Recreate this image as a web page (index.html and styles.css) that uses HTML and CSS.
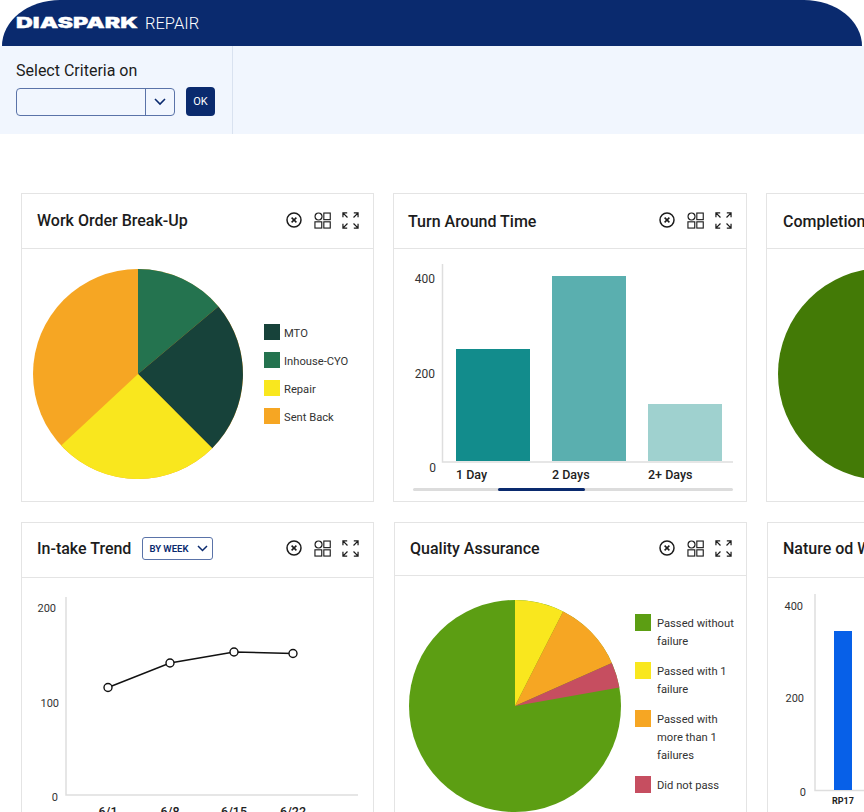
FILE: index.html
```html
<!DOCTYPE html>
<html lang="en">
<head>
<meta charset="utf-8">
<title>Diaspark Repair</title>
<link rel="stylesheet" href="styles.css">
</head>
<body>
<svg class="icon-defs" width="0" height="0" aria-hidden="true">
  <symbol id="i-close" viewBox="0 0 16 16">
    <circle cx="8" cy="8" r="7" fill="none" stroke="#1c1c1c" stroke-width="1.5"/>
    <path d="M5.6 5.6l4.8 4.8M10.4 5.6l-4.8 4.8" fill="none" stroke="#1c1c1c" stroke-width="1.5"/>
  </symbol>
  <symbol id="i-grid" viewBox="0 0 18 18">
    <circle cx="4.8" cy="4.8" r="3.7" fill="none" stroke="#1c1c1c" stroke-width="1.2"/>
    <rect x="10.4" y="1.1" width="6.8" height="7" fill="none" stroke="#1c1c1c" stroke-width="1.2"/>
    <rect x="1" y="10.4" width="7.2" height="6.6" fill="none" stroke="#1c1c1c" stroke-width="1.2"/>
    <rect x="10.4" y="10.4" width="6.8" height="6.6" fill="none" stroke="#1c1c1c" stroke-width="1.2"/>
  </symbol>
  <symbol id="i-expand" viewBox="0 0 18 18">
    <path d="M1 5.5V1h4.5M1.2 1.2l4.6 4.6M17 5.5V1h-4.5M16.8 1.2l-4.6 4.6M1 12.5V17h4.5M1.2 16.8l4.6-4.6M17 12.5V17h-4.5M16.8 16.8l-4.6-4.6" fill="none" stroke="#1c1c1c" stroke-width="1.3"/>
  </symbol>
</svg>

<header class="topbar">
  <svg class="logo" width="124" height="16" viewBox="0 0 124 16">
    <text class="logo-text" x="0" y="13" textLength="122" lengthAdjust="spacingAndGlyphs">DIASPARK</text>
  </svg>
  <span class="product">REPAIR</span>
</header>

<section class="criteria">
  <div class="criteria-panel">
    <label class="criteria-label">Select Criteria on</label>
    <div class="criteria-row">
      <div class="select">
        <span class="select-value"></span>
        <span class="select-arrow">
          <svg width="12" height="8" viewBox="0 0 12 8"><path d="M1 1l5 5 5-5" fill="none" stroke="#0a2a6e" stroke-width="1.6"/></svg>
        </span>
      </div>
      <button class="ok-btn">OK</button>
    </div>
  </div>
</section>

<main class="dashboard">
  <div class="row row-top">
    <article class="card">
      <div class="card-head">
        <h2 class="card-title">Work Order Break-Up</h2>
        <div class="card-tools">
          <svg class="tool tool-close"><use href="#i-close"/></svg>
          <svg class="tool tool-grid"><use href="#i-grid"/></svg>
          <svg class="tool tool-expand"><use href="#i-expand"/></svg>
        </div>
      </div>
      <div class="card-body pie-body pie-one">
        <svg class="pie" width="210" height="210" viewBox="0 0 210 210">
          <circle cx="105" cy="105" r="105" fill="#f6a623"/>
          <path d="M105 105V0A105 105 0 0 1 185.4 37.5Z" fill="#24734f"/>
          <path d="M105 105L185.4 37.5A105 105 0 0 1 179.2 179.2Z" fill="#17423a"/>
          <path d="M105 105L179.2 179.2A105 105 0 0 1 28.2 176.6Z" fill="#f9e71e"/>
        </svg>
        <ul class="legend legend-one">
          <li class="legend-item"><span class="swatch c-dark"></span>MTO</li>
          <li class="legend-item"><span class="swatch c-mid"></span>Inhouse-CYO</li>
          <li class="legend-item"><span class="swatch c-yellow"></span>Repair</li>
          <li class="legend-item"><span class="swatch c-orange"></span>Sent Back</li>
        </ul>
      </div>
    </article>

    <article class="card card-wide">
      <div class="card-head">
        <h2 class="card-title title-low">Turn Around Time</h2>
        <div class="card-tools">
          <svg class="tool tool-close"><use href="#i-close"/></svg>
          <svg class="tool tool-grid"><use href="#i-grid"/></svg>
          <svg class="tool tool-expand"><use href="#i-expand"/></svg>
        </div>
      </div>
      <div class="card-body">
        <svg class="chart" width="352" height="252" viewBox="394 249 352 252">
          <path class="axis" d="M442.5 264V462H733"/>
          <text class="tick" x="435" y="283" text-anchor="end">400</text>
          <text class="tick" x="435" y="378" text-anchor="end">200</text>
          <text class="tick" x="436" y="472" text-anchor="end">0</text>
          <rect x="456" y="349" width="74" height="112" fill="#128c8c"/>
          <rect x="552" y="276" width="74" height="185" fill="#5aafaf"/>
          <rect x="648" y="404" width="74" height="57" fill="#9fd1cf"/>
          <text class="bar-label" x="456" y="479">1 Day</text>
          <text class="bar-label" x="552" y="479">2 Days</text>
          <text class="bar-label" x="648" y="479">2+ Days</text>
          <rect x="413" y="488" width="320" height="3" rx="1.5" fill="#dcdcdc"/>
          <rect x="498" y="488" width="87" height="3" rx="1.5" fill="#0a2a6e"/>
        </svg>
      </div>
    </article>

    <article class="card card-gap">
      <div class="card-head">
        <h2 class="card-title title-low title-clip">Completion</h2>
      </div>
      <div class="card-body">
        <svg class="chart" width="351" height="252" viewBox="767 249 351 252">
          <circle cx="884" cy="374" r="106" fill="#437a06"/>
        </svg>
      </div>
    </article>
  </div>

  <div class="row row-bottom">
    <article class="card">
      <div class="card-head head-tight">
        <div class="title-group">
          <h2 class="card-title">In-take Trend</h2>
          <div class="week-select">
            <span>BY WEEK</span>
            <svg width="11" height="7" viewBox="0 0 11 7"><path d="M1 1l4.5 4.5L10 1" fill="none" stroke="#0a2a6e" stroke-width="1.5"/></svg>
          </div>
        </div>
        <div class="card-tools">
          <svg class="tool tool-close"><use href="#i-close"/></svg>
          <svg class="tool tool-grid"><use href="#i-grid"/></svg>
          <svg class="tool tool-expand"><use href="#i-expand"/></svg>
        </div>
      </div>
      <div class="card-body">
        <svg class="chart" width="351" height="252" viewBox="22 578 351 252">
          <path class="axis" d="M66 597V795H358"/>
          <text class="tick tick-small" x="56" y="612" text-anchor="end">200</text>
          <text class="tick tick-small" x="59" y="707" text-anchor="end">100</text>
          <text class="tick tick-small" x="58" y="801" text-anchor="end">0</text>
          <polyline class="trend" points="108,687.5 170,663 234,652 293,653.5"/>
          <circle class="dot" cx="108" cy="687.5" r="4"/>
          <circle class="dot" cx="170" cy="663" r="4"/>
          <circle class="dot" cx="234" cy="652" r="4"/>
          <circle class="dot" cx="293" cy="653.5" r="4"/>
          <text class="date" x="108" y="816" text-anchor="middle">6/1</text>
          <text class="date" x="170" y="816" text-anchor="middle">6/8</text>
          <text class="date" x="234" y="816" text-anchor="middle">6/15</text>
          <text class="date" x="293" y="816" text-anchor="middle">6/22</text>
        </svg>
      </div>
    </article>

    <article class="card">
      <div class="card-head head-short">
        <h2 class="card-title">Quality Assurance</h2>
        <div class="card-tools">
          <svg class="tool tool-close"><use href="#i-close"/></svg>
          <svg class="tool tool-grid"><use href="#i-grid"/></svg>
          <svg class="tool tool-expand"><use href="#i-expand"/></svg>
        </div>
      </div>
      <div class="card-body pie-body pie-two">
        <svg class="pie" width="212" height="212" viewBox="0 0 212 212">
          <circle cx="106" cy="106" r="106" fill="#5c9e13"/>
          <path d="M106 106V0A106 106 0 0 1 154.1 11.6Z" fill="#f9e71e"/>
          <path d="M106 106L154.1 11.6A106 106 0 0 1 202.8 62.9Z" fill="#f6a623"/>
          <path d="M106 106L202.8 62.9A106 106 0 0 1 210.4 87.6Z" fill="#c64e60"/>
        </svg>
        <ul class="legend legend-two">
          <li class="legend-item"><span class="swatch c-green"></span><span>Passed without failure</span></li>
          <li class="legend-item"><span class="swatch c-yellow"></span><span>Passed with 1 failure</span></li>
          <li class="legend-item"><span class="swatch c-orange"></span><span>Passed with more than 1 failures</span></li>
          <li class="legend-item"><span class="swatch c-red"></span><span>Did not pass</span></li>
        </ul>
      </div>
    </article>

    <article class="card">
      <div class="card-head head-tight">
        <h2 class="card-title">Nature od Work</h2>
      </div>
      <div class="card-body">
        <svg class="chart" width="351" height="252" viewBox="768 578 351 252">
          <path class="axis" d="M815 594V790.5H1000"/>
          <text class="tick tick-small" x="803" y="610" text-anchor="end">400</text>
          <text class="tick tick-small" x="804" y="702" text-anchor="end">200</text>
          <text class="tick tick-small" x="806" y="796" text-anchor="end">0</text>
          <rect x="834" y="631" width="18" height="159" fill="#0760e8"/>
          <text class="mini-label" x="843" y="804" text-anchor="middle">RP17</text>
        </svg>
      </div>
    </article>
  </div>
</main>
</body>
</html>
```

FILE: styles.css
```css
* { box-sizing: border-box; }

html, body {
  margin: 0;
  height: 812px;
  overflow: hidden;
  background: #fff;
  font-family: Roboto, "Liberation Sans", sans-serif;
  color: #1c1c1c;
}

.icon-defs { display: block; height: 0; }

.topbar {
  height: 46px;
  margin: 0 2px;
  background: #0a2a6e;
  border-radius: 58px 58px 0 0 / 46px 46px 0 0;
  display: flex;
  align-items: center;
  padding: 0 0 0 14px;
  gap: 5px;
}

.logo { display: block; }

.logo-text {
  font-family: Inter, "Liberation Sans", sans-serif;
  font-weight: 900;
  font-size: 15px;
  fill: #fff;
  stroke: #fff;
  stroke-width: 0.3;
}

.product {
  color: #fff;
  font-size: 16.5px;
  font-weight: 300;
}

.criteria {
  height: 88px;
  background: #f1f6fe;
}

.criteria-panel {
  width: 233px;
  height: 100%;
  padding: 15px 0 0 16px;
  border-right: 1px solid #d9e2f0;
}

.criteria-label {
  display: block;
  font-size: 16px;
  line-height: 19px;
  color: #1c1c1c;
}

.criteria-row {
  display: flex;
  align-items: center;
  gap: 11px;
  margin-top: 7px;
}

.select {
  width: 159px;
  height: 28px;
  display: flex;
  border: 1px solid #5a73a8;
  border-radius: 4px;
}

.select-value { flex: 1; }

.select-arrow {
  width: 29px;
  display: flex;
  align-items: center;
  justify-content: center;
  border-left: 1px solid #5a73a8;
}

.ok-btn {
  width: 29px;
  height: 29px;
  padding: 0;
  border: 0;
  border-radius: 4px;
  background: #0a2a6e;
  color: #fff;
  font-family: Roboto, sans-serif;
  font-size: 11px;
  font-weight: 400;
}

.dashboard {
  display: flex;
  flex-direction: column;
  gap: 20px;
  padding: 59px 0 0 21px;
  width: 1200px;
}

.row { display: flex; }
.row-top { gap: 19px; }
.row-bottom { gap: 20px; }

.card {
  flex: none;
  width: 353px;
  height: 309px;
  border: 1px solid #e4e4e4;
  background: #fff;
  overflow: hidden;
}

.card-wide { width: 354px; }
.card-gap { margin-left: 0; }

.card-head {
  height: 55px;
  border-bottom: 1px solid #e4e4e4;
  display: flex;
  align-items: center;
  justify-content: space-between;
  padding: 0 14px 2px 15px;
}

.head-tight { padding-bottom: 4px; }
.head-short { height: 53px; padding-bottom: 2px; }

.card-title {
  margin: 0;
  font-size: 16px;
  font-weight: 500;
  color: #1c1c1c;
  white-space: nowrap;
}

.title-low { margin: 2px 0 0 -1px; }
.title-clip { margin-left: 1px; }

.title-group {
  display: flex;
  align-items: center;
  gap: 11px;
}

.week-select {
  width: 71px;
  height: 23px;
  display: flex;
  align-items: center;
  justify-content: space-between;
  padding: 0 4px 0 6px;
  border: 1px solid #5a73a8;
  border-radius: 3px;
  font-size: 9.5px;
  font-weight: 600;
  color: #0a2a6e;
}

.card-tools {
  display: flex;
  align-items: center;
  gap: 11px;
}

.tool { display: block; }
.tool-close { width: 16px; height: 16px; margin-right: 1px; }
.tool-grid { width: 17px; height: 17px; }
.tool-expand { width: 17px; height: 17px; }

.card-body { height: 252px; }

.chart { display: block; overflow: hidden; }

.axis {
  fill: none;
  stroke: #dedede;
  stroke-width: 1.5;
}

.tick {
  font-size: 12px;
  fill: #333;
}

.tick-small { font-size: 11px; }

.bar-label {
  font-size: 12.5px;
  font-weight: 500;
  fill: #222;
}

.date {
  font-size: 12.5px;
  font-weight: 500;
  fill: #222;
}

.mini-label {
  font-size: 9px;
  font-weight: 700;
  fill: #222;
}

.trend {
  fill: none;
  stroke: #111;
  stroke-width: 1.4;
}

.dot {
  fill: #fff;
  stroke: #111;
  stroke-width: 1.4;
}

.pie-body { display: flex; }
.pie { display: block; flex: none; }

.pie-one { padding: 20px 0 0 11px; }
.pie-two { padding: 24px 0 0 14px; }

.legend {
  list-style: none;
  margin: 0;
  padding: 0;
  font-size: 11.2px;
  color: #333;
}

.legend-item { display: flex; }

.swatch { flex: none; width: 16px; height: 16px; }

.legend-one {
  margin: 55px 0 0 21px;
  display: flex;
  flex-direction: column;
  gap: 12px;
}

.legend-one .legend-item {
  align-items: flex-start;
  gap: 4px;
  height: 16px;
  line-height: 20px;
}

.legend-two {
  margin: 15px 0 0 14px;
  width: 104px;
  display: flex;
  flex-direction: column;
  gap: 12px;
}

.legend-two .legend-item { gap: 6px; line-height: 18px; }
.legend-two .swatch { margin-top: -1px; height: 17px; }

.c-dark { background: #17423a; }
.c-mid { background: #24734f; }
.c-yellow { background: #f9e71e; }
.c-orange { background: #f6a623; }
.c-green { background: #5c9e13; }
.c-red { background: #c64e60; }
```
